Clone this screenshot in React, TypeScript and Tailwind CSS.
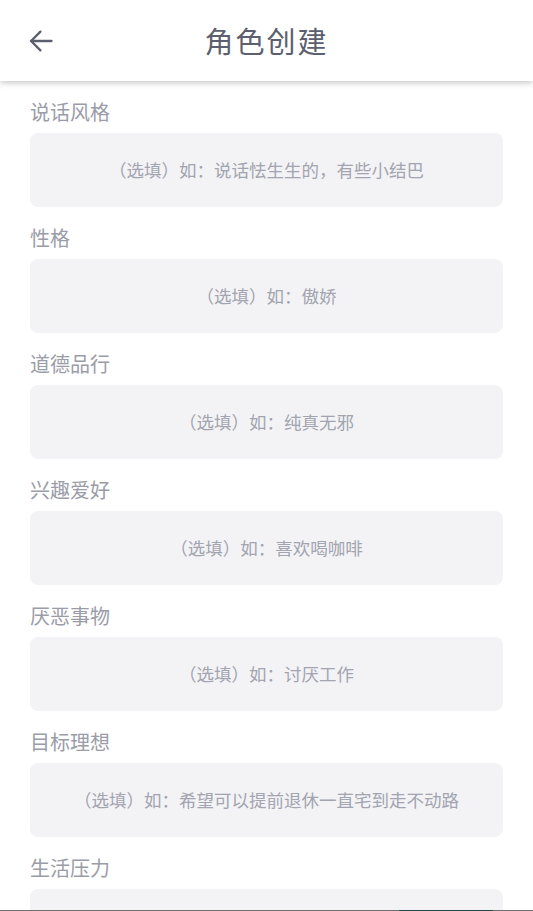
import React from "react";

const fields = [
  { label: "说话风格", hint: "（选填）如：说话怯生生的，有些小结巴" },
  { label: "性格", hint: "（选填）如：傲娇" },
  { label: "道德品行", hint: "（选填）如：纯真无邪" },
  { label: "兴趣爱好", hint: "（选填）如：喜欢喝咖啡" },
  { label: "厌恶事物", hint: "（选填）如：讨厌工作" },
  { label: "目标理想", hint: "（选填）如：希望可以提前退休一直宅到走不动路" },
  { label: "生活压力", hint: "" },
];

const font = "font-['Noto_Sans_CJK_SC','Noto_Sans',sans-serif]";

function BackArrow() {
  return (
    <svg width="28" height="28" viewBox="0 0 24 24" fill="none" stroke="#5b5f6e" strokeWidth="2" strokeLinecap="round" strokeLinejoin="round">
      <path d="M21 12H3.5" />
      <path d="M11.5 4L3.5 12l8 8" />
    </svg>
  );
}

export default function App() {
  return (
    <div className={`flex h-screen w-full flex-col overflow-hidden bg-white ${font}`}>
      {/* Header */}
      <div className="relative z-10 flex h-[81px] shrink-0 items-center bg-white px-[27px] shadow-[0_2px_6px_rgba(0,0,0,0.22)]">
        <button className="flex h-[28px] w-[28px] items-center justify-center">
          <BackArrow />
        </button>
        <h1 className="flex-1 pr-[28px] text-center text-[29px] tracking-[2px] text-[#5b5f6e]">角色创建</h1>
      </div>

      {/* Form */}
      <div className="flex flex-1 flex-col gap-[17px] overflow-hidden px-[30px] pt-[17px]">
        {fields.map((f) => (
          <div key={f.label} className="flex flex-col">
            <label className="h-[28px] text-[20px] leading-[28px] text-[#9a9ca8]">{f.label}</label>
            <div className="mt-[7px] flex h-[74px] shrink-0 items-center justify-center rounded-[8px] bg-[#f3f3f6] text-[17.5px] text-[#a2a4af]">
              {f.hint}
            </div>
          </div>
        ))}
      </div>

      {/* bottom edge */}
      <div className="flex h-px shrink-0">
        <div className="w-[399px] bg-[#6e6e6e]" />
        <div className="w-[94px] bg-[#1e4a48]" />
        <div className="flex-1 bg-[#6e6e6e]" />
      </div>
    </div>
  );
}
